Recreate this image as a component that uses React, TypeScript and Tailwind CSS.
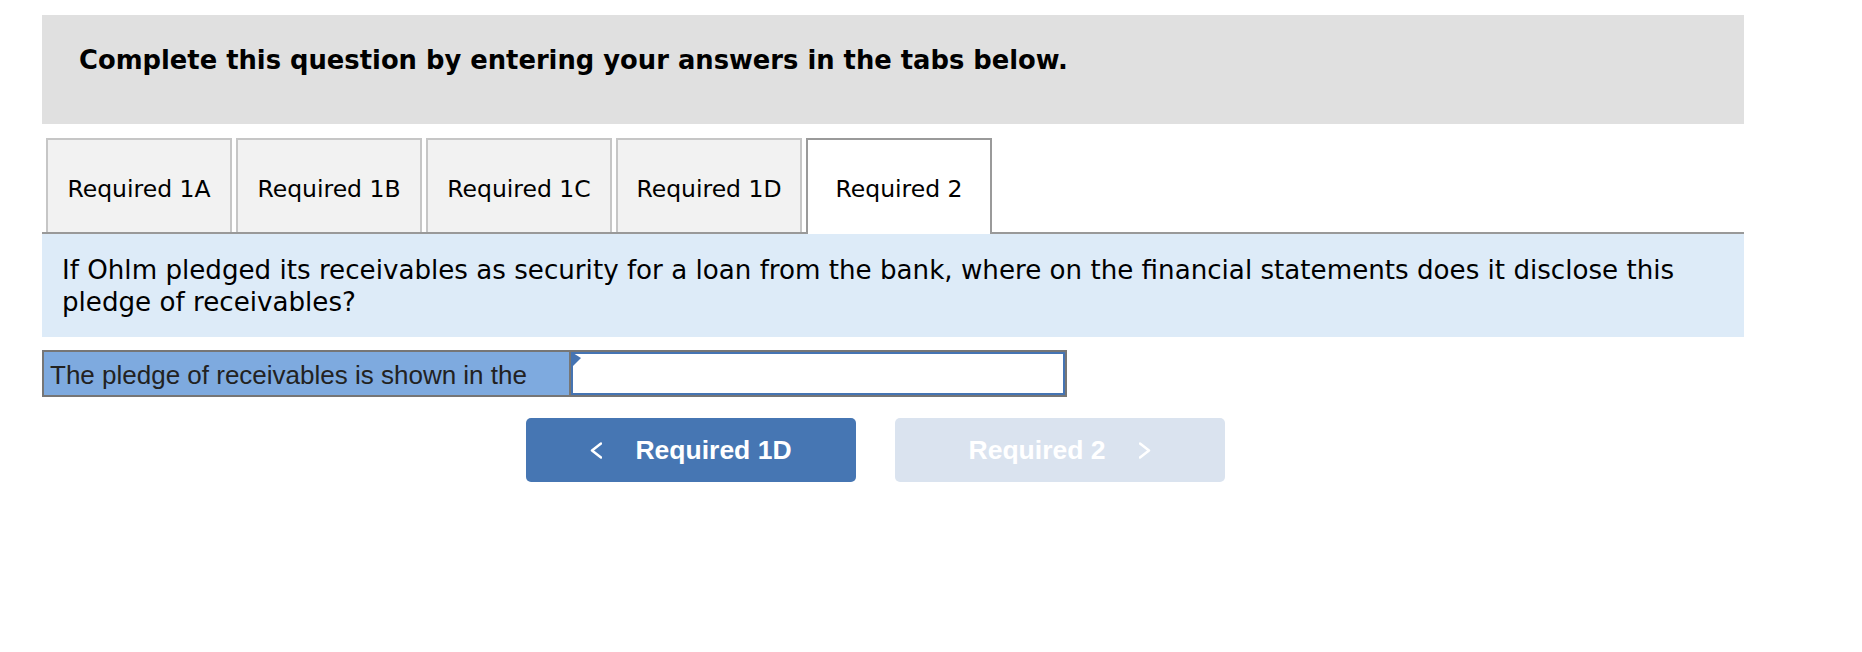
import React from "react";

const tabs = ["Required 1A", "Required 1B", "Required 1C", "Required 1D", "Required 2"];

function Chevron({ dir }: { dir: "left" | "right" }) {
  const points = dir === "left" ? "11,1 2,8 11,15" : "1,1 10,8 1,15";
  return (
    <svg width="12" height="17" viewBox="0 0 12 16" fill="none" className="shrink-0">
      <polyline points={points} stroke="white" strokeWidth="2.5" strokeLinecap="round" strokeLinejoin="round" />
    </svg>
  );
}

export default function App() {
  const active = 4;

  return (
    <div className="min-h-screen bg-white pl-[42px] pt-[15px] font-['DejaVu_Sans',Verdana,sans-serif] text-black">
      <div className="w-[1702px]">
        {/* instructions header */}
        <div className="h-[109px] bg-[#e0e0e0] pl-[37px] pt-[30px]">
          <h2 className="text-[25.8px] font-bold leading-[30px]">
            Complete this question by entering your answers in the tabs below.
          </h2>
        </div>

        {/* tabs */}
        <div className="mt-[14px] flex h-[96px] items-end gap-[4px] border-b-2 border-[#999999] pl-[4px]">
          {tabs.map((t, i) =>
            i === active ? (
              <div
                key={t}
                className="-mb-[2px] flex h-[96px] w-[186px] items-center justify-center border-x-2 border-t-2 border-[#9a9a9a] bg-white pt-[4px] text-[23.5px] leading-[28px]"
              >
                {t}
              </div>
            ) : (
              <div
                key={t}
                className="flex h-[94px] w-[186px] items-center justify-center border-x-2 border-t-2 border-[#c6c6c6] bg-[#f2f2f2] pt-[6px] text-[23.5px] leading-[28px]"
              >
                {t}
              </div>
            )
          )}
        </div>

        {/* question */}
        <div className="bg-[#ddebf8] px-[20px] pt-[20px] pb-[19px] text-[26.15px] leading-[32px]">
          If Ohlm pledged its receivables as security for a loan from the bank, where on the financial
          statements does it disclose this pledge of receivables?
        </div>

        {/* answer row */}
        <div className="mt-[13px] flex h-[47px] w-[1025px] border-2 border-[#767676] font-['Liberation_Sans',Arial,sans-serif]">
          <div className="flex w-[527px] items-center border-r-2 border-[#767676] bg-[#7eaadf] pl-[6px] pt-[3px] text-[26px] text-[#222222]">
            The pledge of receivables is shown in the
          </div>
          <div className="relative flex-1 border-2 border-[#4574b3] bg-white">
            <svg width="9" height="14" viewBox="0 0 9 14" className="absolute -top-[1px] left-0">
              <polygon points="0,0 0,13 8,5" fill="#4574b3" />
            </svg>
          </div>
        </div>

        {/* navigation */}
        <div className="mt-[21px] ml-[484px] flex gap-[39px] font-['Liberation_Sans',Arial,sans-serif] text-[26.5px] font-bold text-white">
          <button className="flex h-[64px] w-[330px] items-center justify-center gap-[33px] rounded-[5px] bg-[#4676b3] pt-[1px]">
            <Chevron dir="left" />
            <span>Required 1D</span>
          </button>
          <button disabled className="flex h-[64px] w-[330px] items-center justify-center gap-[34px] rounded-[5px] bg-[#dae3ef] pt-[1px]">
            <span>Required 2</span>
            <Chevron dir="right" />
          </button>
        </div>
      </div>
    </div>
  );
}
